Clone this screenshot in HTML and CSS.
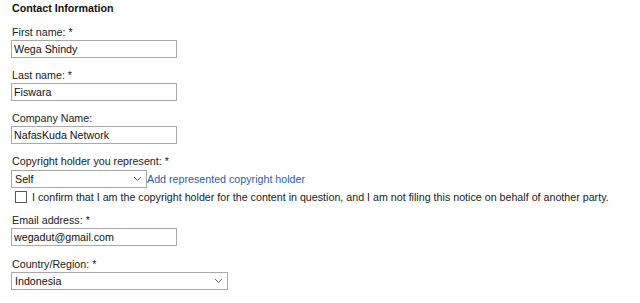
FILE: index.html
```html
<!DOCTYPE html>
<html lang="en">
<head>
    <meta charset="UTF-8">
    <title>Contact Information</title>
    <link rel="stylesheet" href="styles.css">
</head>
<body>
    <form class="contactForm">
        <h3 class="title">Contact Information</h3>

        <div class="field">
            <label>First name: *</label>
            <input class="textInput" type="text" value="Wega Shindy">
        </div>
        <div class="field">
            <label>Last name: *</label>
            <input class="textInput" type="text" value="Fiswara">
        </div>
        <div class="field">
            <label>Company Name:</label>
            <input class="textInput" type="text" value="NafasKuda Network">
        </div>
        <div class="field">
            <label>Copyright holder you represent: *</label>
            <div class="selectRow">
                <div class="selectBox short">
                    <span>Self</span>
                    <svg class="chevron" width="9" height="6" viewBox="0 0 9 6"><path d="M1 1 L4.5 4.5 L8 1" fill="none" stroke="#666" stroke-width="1"/></svg>
                </div>
                <a class="addLink" href="#">Add represented copyright holder</a>
            </div>
            <div class="checkRow">
                <span class="checkBox"></span>
                <span>I confirm that I am the copyright holder for the content in question, and I am not filing this notice on behalf of another party.</span>
            </div>
        </div>
        <div class="field wide">
            <label>Email address: *</label>
            <input class="textInput" type="text" value="wegadut@gmail.com">
        </div>
        <div class="field">
            <label>Country/Region: *</label>
            <div class="selectBox long">
                <span>Indonesia</span>
                <svg class="chevron" width="9" height="6" viewBox="0 0 9 6"><path d="M1 1 L4.5 4.5 L8 1" fill="none" stroke="#666" stroke-width="1"/></svg>
            </div>
        </div>
    </form>
</body>
</html>
```

FILE: styles.css
```css
body{
    margin: 0;
    padding: 0;
    background: white;
    font-family: 'Liberation Sans', Arial, sans-serif;
    font-size: 10.7px;
    color: #222;
}

.contactForm{
    padding: 2px 0 0 11px;
}

.title{
    margin: 0 0 12px 1px;
    font-size: 10.7px;
    line-height: 12px;
    font-weight: bold;
    color: #111;
}

.field{
    display: flex;
    flex-direction: column;
    align-items: flex-start;
    margin-bottom: 11px;
}

.wide{
    margin-bottom: 12px;
}

label{
    display: block;
    line-height: 12px;
    margin: 0 0 2px 1px;
}

.textInput{
    box-sizing: border-box;
    width: 166px;
    height: 18px;
    margin: 0;
    padding: 0 2px;
    border: 1px solid #a9a9a9;
    font-family: 'Liberation Sans', Arial, sans-serif;
    font-size: 10.7px;
    color: #111;
    outline: none;
}

.selectRow{
    display: flex;
    align-items: center;
    margin-top: 1px;
}

.selectBox{
    box-sizing: border-box;
    height: 18px;
    border: 1px solid #a9a9a9;
    display: flex;
    align-items: center;
    justify-content: space-between;
    padding: 0 4px 0 3px;
    color: #111;
}

.short{
    width: 136px;
}

.long{
    width: 217px;
}

.addLink{
    color: #2a5db0;
    text-decoration: none;
    line-height: 12px;
}

.checkRow{
    display: flex;
    align-items: center;
    gap: 5px;
    margin: 3px 0 0 4px;
    line-height: 12px;
}

.checkBox{
    box-sizing: border-box;
    width: 12px;
    height: 12px;
    border: 1px solid #555;
    background: white;
}
```
